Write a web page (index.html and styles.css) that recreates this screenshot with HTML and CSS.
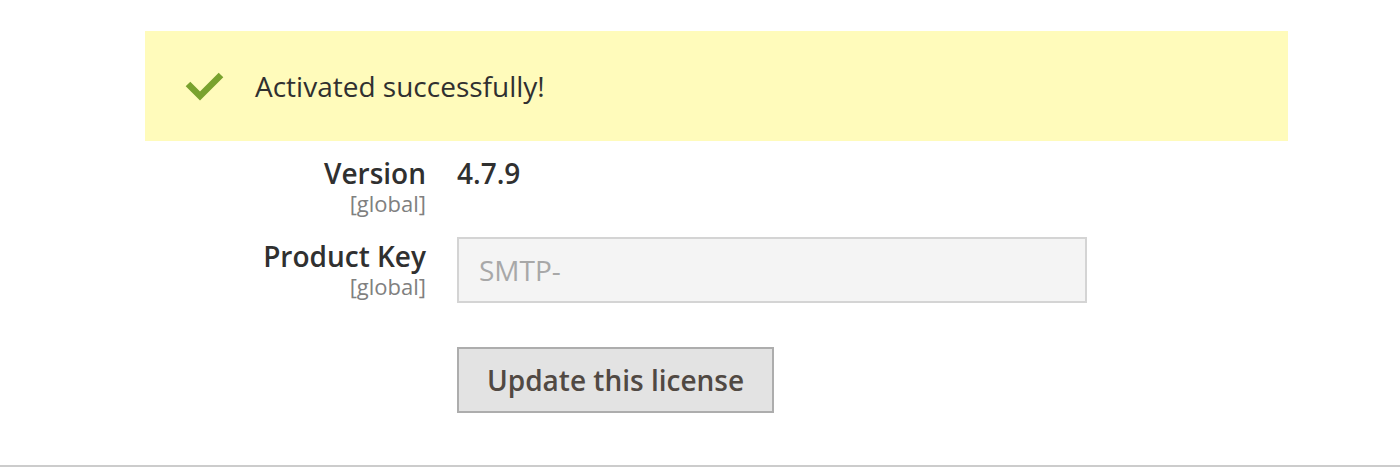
FILE: index.html
```html
<!DOCTYPE html>
<html>
<head>
<meta charset="utf-8">
<link rel="stylesheet" href="styles.css">
</head>
<body>
<div class="page">
  <div class="message">
    <svg class="check" width="40" height="32" viewBox="0 0 40 32"><path d="M4 14 L16 26 L37 5" fill="none" stroke="#79a22e" stroke-width="6.5"/></svg>
    <span class="message-text">Activated successfully!</span>
  </div>
  <div class="form">
    <div class="row row-version">
      <div class="label"><span class="label-text">Version</span><span class="scope">[global]</span></div>
      <div class="value version-value">4.7.9</div>
    </div>
    <div class="row row-key">
      <div class="label"><span class="label-text">Product Key</span><span class="scope">[global]</span></div>
      <div class="value"><input class="input" type="text" value="SMTP-" disabled></div>
    </div>
    <div class="row row-button">
      <div class="label"></div>
      <div class="value"><button class="button">Update this license</button></div>
    </div>
  </div>
</div>
</body>
</html>
```
FILE: styles.css
```css
html, body {
  margin: 0;
  padding: 0;
  background: #ffffff;
}
body {
  font-family: "Open Sans", "Noto Sans", sans-serif;
  color: #303030;
}
.page {
  height: 467px;
  border-bottom: 2px solid #cccccc;
  padding-top: 31px;
  box-sizing: border-box;
}
.message {
  margin-left: 145px;
  width: 1143px;
  height: 110px;
  background: #fffbbb;
  display: flex;
  align-items: center;
  box-sizing: border-box;
  padding-left: 39px;
}
.check {
  flex: none;
  margin-right: 31px;
}
.message-text {
  font-size: 28px;
  color: #303030;
}
.form {
  display: flex;
  flex-direction: column;
}
.row {
  display: flex;
}
.label {
  width: 426px;
  flex: none;
  display: flex;
  flex-direction: column;
  align-items: flex-end;
}
.label-text {
  font-size: 28px;
  font-weight: 600;
  line-height: 36px;
}
.scope {
  font-size: 22px;
  color: #808080;
  line-height: 24px;
}
.value {
  margin-left: 31px;
}
.row-version {
  margin-top: 14px;
}
.version-value {
  font-size: 28px;
  font-weight: 600;
  line-height: 36px;
}
.row-key {
  margin-top: 22px;
}
.row-key .label {
  padding-top: 1px;
}
.input {
  display: block;
  width: 630px;
  height: 66px;
  box-sizing: border-box;
  border: 2px solid #d4d4d4;
  background: #f4f4f4;
  font-family: "Open Sans", sans-serif;
  font-size: 28px;
  color: #a8a8a8;
  padding: 0 20px;
  margin: 0;
}
.row-button {
  margin-top: 44px;
}
.button {
  display: block;
  height: 66px;
  width: 317px;
  box-sizing: border-box;
  border: 2px solid #adadad;
  background: #e3e3e3;
  color: #514943;
  font-family: "Open Sans", sans-serif;
  font-size: 28px;
  font-weight: 600;
  padding: 0;
  margin: 0;
}
```
